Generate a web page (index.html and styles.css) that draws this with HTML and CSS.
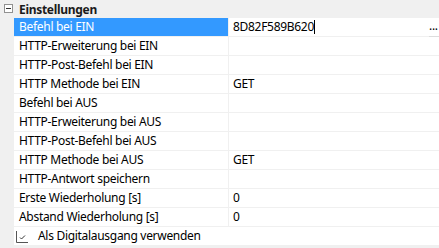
FILE: index.html
```html
<!DOCTYPE html>
<html lang="de">
<head>
    <meta charset="UTF-8">
    <title>Einstellungen</title>
    <link rel="stylesheet" href="styles.css">
</head>
<body>
    <div class="grid">
        <div class="category">
            <span class="toggle"><svg width="9" height="9" viewBox="0 0 9 9"><rect x="0.5" y="0.5" width="8" height="8" fill="#fff" stroke="#919191"/><path d="M2 4.5h5" stroke="#333"/></svg></span>
            <span class="category-title">Einstellungen</span>
        </div>

        <div class="row selected">
            <div class="name">Befehl bei EIN</div>
            <div class="value editing"><span>8D82F589B620</span><span class="caret"></span><span class="more">...</span></div>
        </div>
        <div class="row"><div class="name">HTTP-Erweiterung bei EIN</div><div class="value"></div></div>
        <div class="row"><div class="name">HTTP-Post-Befehl bei EIN</div><div class="value"></div></div>
        <div class="row"><div class="name">HTTP Methode bei EIN</div><div class="value">GET</div></div>
        <div class="row"><div class="name">Befehl bei AUS</div><div class="value"></div></div>
        <div class="row"><div class="name">HTTP-Erweiterung bei AUS</div><div class="value"></div></div>
        <div class="row"><div class="name">HTTP-Post-Befehl bei AUS</div><div class="value"></div></div>
        <div class="row"><div class="name">HTTP Methode bei AUS</div><div class="value">GET</div></div>
        <div class="row"><div class="name">HTTP-Antwort speichern</div><div class="value"></div></div>
        <div class="row"><div class="name">Erste Wiederholung [s]</div><div class="value">0</div></div>
        <div class="row"><div class="name">Abstand Wiederholung [s]</div><div class="value">0</div></div>
        <div class="row check-row">
            <div class="name wide">
                <span class="checkbox"><svg width="12" height="12" viewBox="0 0 12 12"><path d="M0.5 0v11.5H12" fill="none" stroke="#555"/><path d="M4 6.5l1.5 1.5 3.5-3.5" fill="none" stroke="#333"/></svg></span>
                Als Digitalausgang verwenden
            </div>
        </div>
    </div>
</body>
</html>
```

FILE: styles.css
```css
body {
    margin: 0;
    font-family: "Noto Sans", "Open Sans", sans-serif;
    font-size: 12px;
    letter-spacing: -0.3px;
    color: #000;
    background-color: #f0f0f0;
}

.grid {
    width: 439px;
    height: 248px;
    background-color: #f0f0f0;
}

.category {
    display: flex;
    align-items: center;
    height: 18px;
}

.toggle {
    width: 14px;
    display: flex;
    justify-content: center;
    padding-left: 1px;
    margin-top: -2px;
}

.category-title {
    font-weight: bold;
    padding-left: 4px;
    color: #1a1a1a;
}

.row {
    display: flex;
    height: 18px;
    margin-left: 14px;
    border-bottom: 1px solid #f0f0f0;
    background-color: #fff;
}

.name {
    width: 209px;
    padding-left: 5px;
    line-height: 18px;
    white-space: nowrap;
    border-right: 1px solid #f0f0f0;
}

.value {
    flex: 1;
    padding-left: 4px;
    line-height: 18px;
    white-space: nowrap;
    position: relative;
}

.selected .name {
    background-color: #3399ff;
    color: #fff;
}

.editing {
    display: flex;
}

.caret {
    width: 1px;
    height: 14px;
    margin-top: 2px;
    background-color: #000;
}

.more {
    position: absolute;
    right: 0;
    top: 0;
    width: 10px;
    height: 18px;
    line-height: 16px;
    border-bottom: 1px solid #ddd;
}

.check-row .wide {
    width: auto;
    flex: 1;
    border-right: none;
    display: flex;
    align-items: center;
    padding-left: 2px;
}

.checkbox {
    display: flex;
    width: 12px;
    height: 12px;
    margin-right: 10px;
    margin-top: 1px;
}
```
